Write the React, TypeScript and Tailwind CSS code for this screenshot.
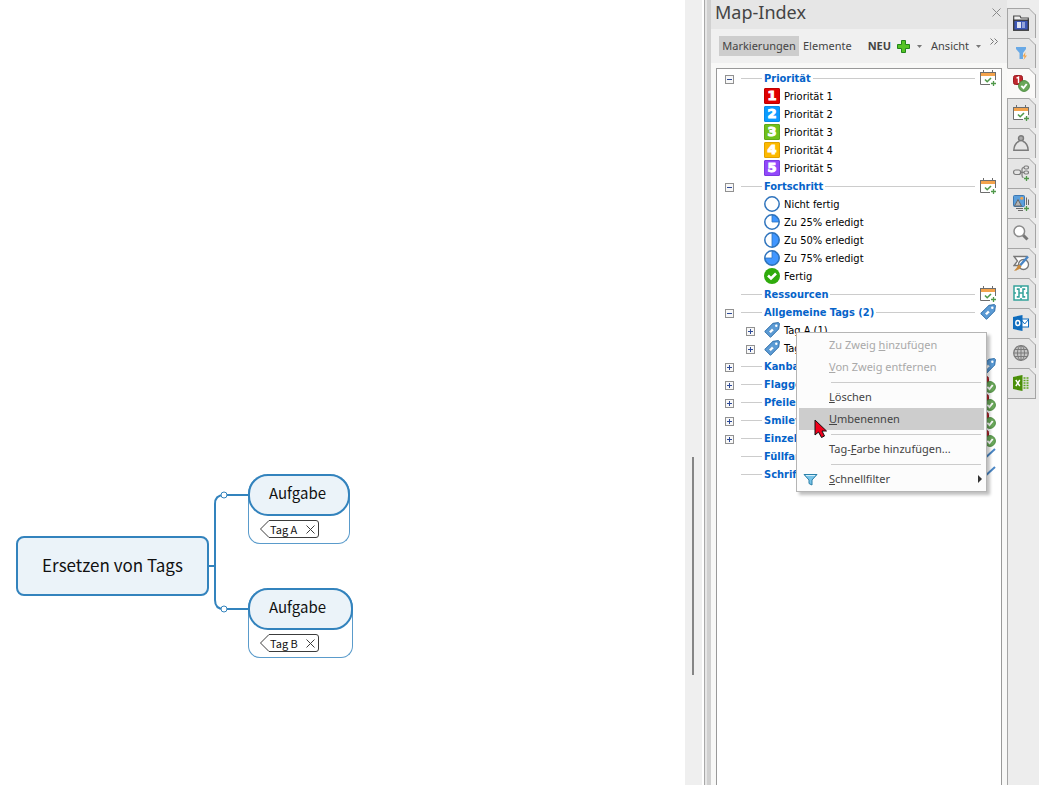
import type { ReactNode } from "react";

const TREE_FONT = "font-['DejaVu_Sans_Condensed','DejaVu_Sans',sans-serif] [font-stretch:condensed]";
const UI_FONT = "font-['Noto_Sans','Open_Sans',sans-serif]";
const MAP_FONT = "font-['Noto_Sans_CJK_SC',sans-serif]";

type Marker = "calendar" | "tag" | "marker" | "pen";

type Group = {
  label: string;
  expander?: "plus" | "minus";
  marker: Marker;
  items?: { label: string; icon: ReactNode; expandable?: boolean }[];
};

const GROUPS: Group[] = [
  {
    label: "Priorität",
    expander: "minus",
    marker: "calendar",
    items: [
      { label: "Priorität 1", icon: <PriorityIcon value={1} className="border-[#c00000] bg-[#e00000]" /> },
      { label: "Priorität 2", icon: <PriorityIcon value={2} className="border-[#0a8be6] bg-[#0a9bff]" /> },
      { label: "Priorität 3", icon: <PriorityIcon value={3} className="border-[#5fa818] bg-[#6fc11b]" /> },
      { label: "Priorität 4", icon: <PriorityIcon value={4} className="border-[#e0a200] bg-[#fdb900]" /> },
      { label: "Priorität 5", icon: <PriorityIcon value={5} className="border-[#7a3ae0] bg-[#9248fb]" /> },
    ],
  },
  {
    label: "Fortschritt",
    expander: "minus",
    marker: "calendar",
    items: [
      { label: "Nicht fertig", icon: <ProgressIcon /> },
      { label: "Zu 25% erledigt", icon: <ProgressIcon slice="M8 8V1A7 7 0 0 1 15 8Z" /> },
      { label: "Zu 50% erledigt", icon: <ProgressIcon slice="M8 1A7 7 0 0 1 8 15Z" /> },
      { label: "Zu 75% erledigt", icon: <ProgressIcon slice="M8 8V1A7 7 0 1 1 1 8Z" /> },
      { label: "Fertig", icon: <DoneIcon /> },
    ],
  },
  { label: "Ressourcen", marker: "calendar" },
  {
    label: "Allgemeine Tags (2)",
    expander: "minus",
    marker: "tag",
    items: [
      { label: "Tag A (1)", icon: <TagIcon />, expandable: true },
      { label: "Tag B (1)", icon: <TagIcon />, expandable: true },
    ],
  },
  { label: "Kanban", expander: "plus", marker: "tag" },
  { label: "Flaggen", expander: "plus", marker: "marker" },
  { label: "Pfeile", expander: "plus", marker: "marker" },
  { label: "Smileys", expander: "plus", marker: "marker" },
  { label: "Einzeln", expander: "plus", marker: "marker" },
  { label: "Füllfarbe", marker: "pen" },
  { label: "Schriftfarbe", marker: "pen" },
];

const TABS: { label: string; icon: ReactNode; active?: boolean }[] = [
  { label: "Bibliothek", icon: <LibraryIcon /> },
  { label: "Filter", icon: <FilterFlashIcon /> },
  { label: "Map-Index", icon: <MarkerIcon />, active: true },
  { label: "Aufgaben", icon: <CalendarIcon /> },
  { label: "Ressourcen", icon: <PersonIcon /> },
  { label: "Mapelemente", icon: <TopicsIcon /> },
  { label: "Bilder", icon: <ImagesIcon /> },
  { label: "Suche", icon: <SearchIcon /> },
  { label: "Design", icon: <DesignIcon /> },
  { label: "SnapShots", icon: <SnapIcon /> },
  { label: "Outlook", icon: <OutlookIcon /> },
  { label: "Browser", icon: <GlobeIcon /> },
  { label: "Excel", icon: <ExcelIcon /> },
];

export default function App() {
  return (
    <div className={`flex h-screen overflow-hidden bg-white text-[#444] ${UI_FONT}`}>
      <MapCanvas />
      <div className="flex w-[17px] shrink-0 bg-[#efefef] pl-[7px]">
        <div className="mt-[457px] h-[218px] w-0.5 bg-[#858585]" />
      </div>
      <div className="ml-0.5 w-[7px] shrink-0 border-l border-[#a8a8a8] bg-linear-to-r from-[#e6e6e6] from-30% to-[#d0d0d0] to-30%" />
      <IndexPanel />
      <TabStrip />
    </div>
  );
}

function MapCanvas() {
  return (
    <main className={`relative min-w-0 flex-1 text-[#111] ${MAP_FONT}`}>
      <svg className="absolute top-[480px] left-[200px]" width="60" height="150" fill="none" stroke="#3383bd" strokeWidth="2">
        <path d="M8 86H15M48 15H24Q15 15 15 24V120Q15 129 24 129H48" />
        <circle cx="24" cy="15" r="3" fill="#fff" strokeWidth="1" />
        <circle cx="24" cy="129" r="3" fill="#fff" strokeWidth="1" />
      </svg>
      <div className="absolute top-[536px] left-4 flex h-[60px] w-[193px] items-center justify-center rounded-lg border-2 border-[#3383bd] bg-[#ebf3f9] text-[17px]">
        <span className="pb-0.5">Ersetzen von Tags</span>
      </div>
      <Topic className="top-[474px] w-[102px]" tag="Tag A" />
      <Topic className="top-[588px] w-[105px]" tag="Tag B" />
    </main>
  );
}

function Topic({ className, tag }: { className: string; tag: string }) {
  return (
    <div className={`absolute left-[248px] h-[70px] rounded-[20px_20px_12px_12px] border border-t-0 border-[#5a9bcb] ${className}`}>
      <div className="-mx-px flex h-[42px] items-center rounded-[20px] border-2 border-[#3383bd] bg-[#ebf3f9] pb-[3px] pl-[19px] text-[15px]">
        Aufgabe
      </div>
      <div className="relative mt-1 ml-[11px] flex h-[18px] w-[59px] items-center">
        <svg className="absolute inset-0" width="59" height="18" fill="none" stroke="#3c3c3c">
          <path d="M9 .5H56Q58.500 .5 58.500 3V15Q58.500 17.500 56 17.500H9L.5 9Z" />
        </svg>
        <span className="relative ml-[10px] text-[11px] leading-4">{tag}</span>
        <button type="button" aria-label={`${tag} entfernen`} className="absolute top-[5px] right-1">
          <svg width="9" height="9" stroke="#3c3c3c">
            <path d="M.5 .5 8.500 8.500M8.500 .5 .5 8.500" />
          </svg>
        </button>
      </div>
    </div>
  );
}

function IndexPanel() {
  return (
    <aside className="flex w-74 shrink-0 flex-col bg-[#f8f8f7]">
      <header className="flex h-[29px] items-start justify-between bg-[#e6e6e6] pr-1.5 pl-1">
        <h1 className="text-[18px] leading-[25px]">Map-Index</h1>
        <button type="button" aria-label="Schließen" className="mt-2">
          <svg width="9" height="9" stroke="#8a8a8a">
            <path d="M.5 .5 8.500 8.500M8.500 .5 .5 8.500" />
          </svg>
        </button>
      </header>
      <div className="flex h-[34px] items-center bg-[#f0f0f0] pl-2 text-[11px]">
        <button type="button" className="h-5 w-20 bg-[#cdcdcd]">
          Markierungen
        </button>
        <button type="button" className="ml-1">
          Elemente
        </button>
        <button type="button" className="ml-4 flex items-center font-bold">
          NEU
          <svg className="ml-1.5" width="13" height="13">
            <path d="M4.500 .5H8.500V4.500H12.500V8.500H8.500V12.500H4.500V8.500H.5V4.500H4.500Z" fill="#55c425" stroke="#23851a" />
          </svg>
          <Caret />
        </button>
        <button type="button" className="ml-[9px] flex items-center">
          Ansicht
          <Caret />
        </button>
        <button type="button" aria-label="Mehr" className="mr-2 mb-2.5 ml-auto">
          <svg width="9" height="7" fill="none" stroke="#777">
            <path d="M.5 .5 3.500 3.500 .5 6.500M4.500 .5 7.500 3.500 4.500 6.500" />
          </svg>
        </button>
      </div>
      <div className="relative mx-[5px] mt-[5px] flex-1 border border-b-0 border-[#999] bg-white">
        <ul className={`text-[11px] leading-[18px] text-black ${TREE_FONT}`}>
          {GROUPS.map((group) => (
            <li key={group.label}>
              <GroupRow group={group} />
              {group.items && (
                <ul>
                  {group.items.map((item) => (
                    <li key={item.label} className="flex h-[18px] items-center pl-[29px]">
                      <span className="w-[18px] pt-0.5">{item.expandable && <Expander kind="plus" label={item.label} />}</span>
                      {item.icon}
                      <span className="ml-1 pt-0.5">{item.label}</span>
                    </li>
                  ))}
                </ul>
              )}
            </li>
          ))}
        </ul>
        <ContextMenu />
        <svg className="absolute top-[350px] left-[97px]" width="14" height="20">
          <path d="M1 1V16L4.500 13 7.500 18.500 10.500 17 8 12H12.500Z" fill="#f0001c" stroke="#111" />
        </svg>
      </div>
    </aside>
  );
}

function GroupRow({ group }: { group: Group }) {
  return (
    <div className="flex h-[18px] items-center pr-[5px] pl-2">
      <span className="w-4 pt-0.5">{group.expander && <Expander kind={group.expander} label={group.label} />}</span>
      <span className="h-px w-[21px] bg-[#ccc]" />
      <span className="mx-0.5 pt-0.5 font-bold whitespace-nowrap text-[#0563c9]">{group.label}</span>
      <span className="mr-[5px] h-px flex-1 bg-[#ccc]" />
      {group.marker === "calendar" && <CalendarIcon />}
      {group.marker === "tag" && <TagIcon />}
      {group.marker === "marker" && <MarkerIcon />}
      {group.marker === "pen" && <PenIcon />}
    </div>
  );
}

function Expander({ kind, label }: { kind: "plus" | "minus"; label: string }) {
  return (
    <button type="button" aria-label={label} className="block">
      <svg width="9" height="9" fill="none">
        <rect x=".5" y=".5" width="8" height="8" fill="#f8f8f8" stroke="#919191" />
        <path d={kind === "plus" ? "M2 4.500H7M4.500 2V7" : "M2 4.500H7"} stroke="#2d4a98" />
      </svg>
    </button>
  );
}

function ContextMenu() {
  return (
    <div
      role="menu"
      className="absolute top-[263px] left-[79px] w-[191px] border border-[#b5b5b5] bg-[#fcfcfc] px-0.5 py-px text-[11px] shadow-[3px_3px_3px_rgba(0,0,0,0.25)]"
    >
      <MenuItem disabled>
        Zu Zweig <u>h</u>inzufügen
      </MenuItem>
      <MenuItem disabled>
        <u>V</u>on Zweig entfernen
      </MenuItem>
      <MenuSeparator />
      <MenuItem>
        <u>L</u>öschen
      </MenuItem>
      <MenuItem highlighted>
        <u>U</u>mbenennen
      </MenuItem>
      <MenuSeparator />
      <MenuItem>
        Tag-<u>F</u>arbe hinzufügen...
      </MenuItem>
      <MenuSeparator />
      <MenuItem icon={<FunnelIcon />} submenu>
        <u>S</u>chnellfilter
      </MenuItem>
    </div>
  );
}

function MenuItem({
  children,
  icon,
  disabled,
  highlighted,
  submenu,
}: {
  children: ReactNode;
  icon?: ReactNode;
  disabled?: boolean;
  highlighted?: boolean;
  submenu?: boolean;
}) {
  return (
    <button
      type="button"
      role="menuitem"
      disabled={disabled}
      className={`flex h-[22px] w-full items-center pr-0.5 pl-1 text-left disabled:text-[#a9a9a9] ${highlighted ? "bg-[#cdcdcd]" : ""}`}
    >
      <span className="w-[26px] shrink-0">{icon}</span>
      <span className="flex-1 whitespace-nowrap">{children}</span>
      {submenu && (
        <svg width="4" height="8" fill="#333">
          <path d="M0 0 4 4 0 8Z" />
        </svg>
      )}
    </button>
  );
}

function MenuSeparator() {
  return (
    <div role="separator" className="flex h-2 items-center pr-[3px] pl-8">
      <div className="h-px w-full bg-[#ccc]" />
    </div>
  );
}

function TabStrip() {
  return (
    <nav className="flex w-8 shrink-0 flex-col bg-[#ededed] pt-2">
      {TABS.map((tab) => (
        <button
          key={tab.label}
          type="button"
          aria-label={tab.label}
          className={`relative flex h-[30px] w-[29px] items-center border-t border-r border-l border-[#a5a5a5] pl-[5px] last-of-type:h-[31px] last-of-type:border-b ${
            tab.active ? "border-l-[#faf9f8] bg-[#faf9f8]" : "bg-[#e5e5e5]"
          }`}
        >
          {tab.icon}
          <svg className="absolute -top-px -right-px" width="7" height="7">
            <path d="M0 0H7V7Z" fill="#ededed" />
            <path d="M0 .5 6.500 7" fill="none" stroke="#a5a5a5" />
          </svg>
        </button>
      ))}
      <div className="w-px flex-1 bg-[#a5a5a5]" />
    </nav>
  );
}

function Caret() {
  return (
    <svg className="ml-[7px]" width="5" height="3" fill="#777">
      <path d="M0 0H5L2.500 3Z" />
    </svg>
  );
}

function PriorityIcon({ value, className }: { value: number; className: string }) {
  return (
    <span
      className={`flex h-4 w-4 items-center justify-center rounded-[1px] border font-['DejaVu_Sans',sans-serif] text-[13px] leading-4 font-bold text-white [-webkit-text-stroke:1px_white] [font-stretch:normal] ${className}`}
    >
      {value}
    </span>
  );
}

function ProgressIcon({ slice }: { slice?: string }) {
  return (
    <svg width="16" height="16">
      <circle cx="8" cy="8" r="7.200" fill="#fff" />
      {slice && <path d={slice} fill="#4096ff" />}
      <circle cx="8" cy="8" r="7.200" fill="none" stroke="#2f74bd" strokeWidth="1.500" />
      {slice && <path d={slice} fill="none" stroke="#2f74bd" strokeWidth=".8" />}
    </svg>
  );
}

function DoneIcon() {
  return (
    <svg width="16" height="16" fill="none">
      <circle cx="8" cy="8" r="8" fill="#2fab0c" />
      <path d="M4 7.500 7 10.500 12 5.500" stroke="#fff" strokeWidth="2.600" />
    </svg>
  );
}

function TagIcon() {
  return (
    <svg width="16" height="16" fill="none" className="shrink-0">
      <path d="M.7 9.500 9 1.300 14.500 .6 15.400 1.500 14.700 7 6.500 15.300Z" fill="#5b9bd5" stroke="#2e6da8" />
      <circle cx="12.300" cy="3.700" r="1.200" fill="#fff" />
      <path d="M4.800 9.500 8 6.300 10 8.300 6.800 11.500Z" fill="#fff" stroke="#3f7fbd" strokeWidth=".6" />
    </svg>
  );
}

function CalendarIcon() {
  return (
    <svg width="16" height="17" fill="none" className="shrink-0">
      <path d="M10 14.500H.5V2.500H15.500V10" fill="#fff" stroke="#6e6e6e" />
      <path d="M1 3H15V6H1Z" fill="#f3a34c" />
      <path d="M0 2.500H16M3.500 0V3M12.500 0V3" stroke="#6e6e6e" />
      <path d="M5 9.500 7.200 11.700 11 8" stroke="#50994a" strokeWidth="1.600" />
      <path d="M13.500 11V16M11 13.500H16" stroke="#50994a" strokeWidth="1.300" />
    </svg>
  );
}

function MarkerIcon() {
  return (
    <svg width="17" height="17" fill="none" className="shrink-0">
      <rect x=".5" y=".5" width="9" height="9" rx="2" fill="#c0272d" stroke="#9c1f24" />
      <path d="M3.500 3.200 5.500 2.200V8" stroke="#fff" strokeWidth="1.400" />
      <circle cx="11" cy="11" r="5.400" fill="#6aa75a" stroke="#4f8f42" />
      <path d="M8.300 10.800 10.500 13 13.700 9" stroke="#fff" strokeWidth="1.900" />
    </svg>
  );
}

function PenIcon() {
  return (
    <svg width="16" height="16" fill="none" className="shrink-0">
      <path d="M3 12 15 1" stroke="#4a86c5" strokeWidth="2" />
      <path d="M1 14 4 11" stroke="#444" />
    </svg>
  );
}

function FunnelIcon() {
  return (
    <svg width="16" height="16" className="mt-px" fill="none">
      <path d="M1 2.500H14L9 8V13L6 11.500V8Z" fill="#79c4e8" stroke="#2a7fa8" />
      <path d="M3 3.500H12" stroke="#d3f0fb" />
    </svg>
  );
}

function LibraryIcon() {
  return (
    <svg width="17" height="17" fill="none">
      <path d="M.7 6V1H7L8 3H15.300V6" fill="#eee" stroke="#4a4a4a" strokeWidth="1.200" />
      <rect x=".7" y="5.200" width="14.600" height="10" fill="#3c57b5" stroke="#3a3a3a" strokeWidth="1.400" />
      <path d="M4 7H8V13H4Z" fill="#dfe4f2" />
      <path d="M9 7H12V13H9Z" fill="#93a4d8" />
    </svg>
  );
}

function FilterFlashIcon() {
  return (
    <svg width="17" height="17" fill="none">
      <path d="M3 2H13V4L10 8V14H6.500V8L3 4Z" fill="#69a9e6" />
      <path d="M12.500 7 9.500 11.500H11.500L10.500 15 14 10.500H12Z" fill="#f2a64d" />
    </svg>
  );
}

function PersonIcon() {
  return (
    <svg width="17" height="17" fill="none" stroke="#7b7b7b" strokeWidth="1.400">
      <path d="M6.500 6C3 7.500 1 10.500 .8 15.300H15.200C15 10.500 13 7.500 9.500 6" />
      <circle cx="8" cy="3.300" r="2.500" fill="#aaa" />
    </svg>
  );
}

function TopicsIcon() {
  return (
    <svg width="17" height="17" fill="none" stroke="#7b7b7b" strokeWidth="1.200">
      <rect x=".6" y="5" width="7" height="4.500" rx="2" />
      <path d="M7.600 7.300H11M9 7.300V4Q9 2.500 11 2.500M9 7.300V10.500Q9 12.500 10.500 12.500" />
      <rect x="11" y="1" width="4.500" height="3" rx="1.500" />
      <rect x="11" y="6" width="4.500" height="3" rx="1.500" />
      <path d="M13.500 11V16M11 13.500H16" stroke="#50994a" strokeWidth="1.300" />
    </svg>
  );
}

function ImagesIcon() {
  return (
    <svg width="17" height="17" fill="none">
      <path d="M13.500 2.500V10M3 13.500H10M15.500 4.500V10M5 15.500H10" stroke="#6b6b6b" />
      <rect x=".5" y=".5" width="11" height="11" rx="1" fill="#5b9fdc" stroke="#3d78b3" />
      <path d="M1.500 11 5 4.500 8.500 11Z" fill="#b5b5b5" stroke="#666" />
      <circle cx="8.800" cy="3.300" r="1.500" fill="#f2a64d" />
      <path d="M13.500 11V16M11 13.500H16" stroke="#50994a" strokeWidth="1.300" />
    </svg>
  );
}

function SearchIcon() {
  return (
    <svg width="17" height="17" fill="none">
      <path d="M10 10 14.500 14.500" stroke="#777" strokeWidth="3" />
      <circle cx="6.300" cy="6.300" r="5.300" fill="#fff" stroke="#8b8b8b" strokeWidth="1.500" />
    </svg>
  );
}

function DesignIcon() {
  return (
    <svg width="17" height="17" fill="none">
      <path d="M14.500 1.500H1L4.500 6 1 10.500H6" fill="#fff" stroke="#777" strokeWidth="1.300" />
      <circle cx="10.500" cy="9.500" r="5" fill="#fff" stroke="#777" strokeWidth="1.300" />
      <path d="M15 1.500 7 10.500" stroke="#4a86c5" strokeWidth="2.500" />
      <path d="M6.500 9.500 8.500 11.500Q6.500 15.500 1 15.800 4 13.500 4.500 11Z" fill="#c98a3c" />
    </svg>
  );
}

function SnapIcon() {
  return (
    <svg width="17" height="17" fill="none" stroke="#35a39b" strokeWidth="1.500">
      <rect x="1" y="1" width="14" height="14" fill="#fff" />
      <path d="M8 1V3M8 13V15M1 8H3M13 8H15" />
      <path d="M4.500 5V4H6V12H4.500V11M11.500 5V4H10V12H11.500V11" />
      <path d="M6 8H10" />
    </svg>
  );
}

function OutlookIcon() {
  return (
    <svg width="17" height="17" fill="none">
      <rect x="8" y="4" width="7.500" height="8" fill="#fff" stroke="#0f6cbd" />
      <path d="M8 4.500 11.700 9 15.500 4.500" stroke="#0f6cbd" />
      <path d="M0 2 9.500 0V16L0 14Z" fill="#0f6cbd" />
      <ellipse cx="4.800" cy="8" rx="2" ry="2.500" stroke="#fff" strokeWidth="1.400" />
    </svg>
  );
}

function GlobeIcon() {
  return (
    <svg width="17" height="17" fill="none" stroke="#7b7b7b">
      <circle cx="8" cy="8" r="7.300" fill="#c6c6c6" strokeWidth="1.300" />
      <ellipse cx="8" cy="8" rx="3.500" ry="7.300" />
      <path d="M8 1V15M1 8H15M2 4.500H14M2 11.500H14" />
    </svg>
  );
}

function ExcelIcon() {
  return (
    <svg width="17" height="17" fill="none">
      <path d="M10.500 3H15.500M10.500 5.500H15.500M10.500 8H15.500M10.500 10.500H15.500M10.500 13H15.500" stroke="#5da71f" strokeWidth="1.500" strokeDasharray="2 1" />
      <path d="M0 2 9.500 0V16L0 14Z" fill="#4a8f08" />
      <path d="M2.800 5 6.800 11M6.800 5 2.800 11" stroke="#fff" strokeWidth="1.400" />
    </svg>
  );
}
